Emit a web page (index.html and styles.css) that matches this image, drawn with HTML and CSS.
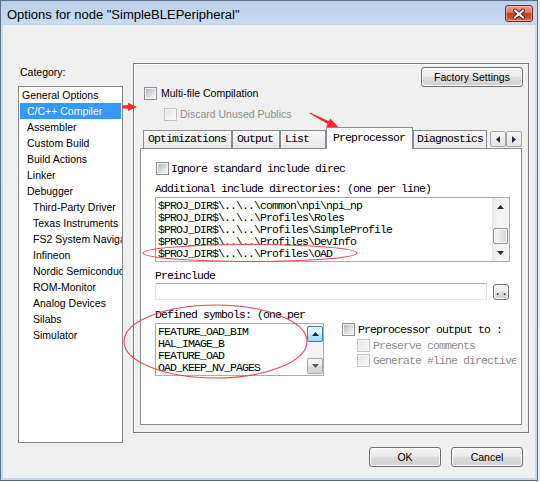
FILE: index.html
```html
<!DOCTYPE html>
<html>
<head>
<meta charset="utf-8">
<title>Options for node</title>
<link rel="stylesheet" href="styles.css">
</head>
<body>
<div class="window">
  <div class="titlebar">
    <span class="title">Options for node "SimpleBLEPeripheral"</span>
    <div class="close">
      <svg width="26" height="14" viewBox="0 0 26 14">
        <path d="M9 3.5 L17 10.5 M17 3.5 L9 10.5" stroke="#4a1e18" stroke-width="4" stroke-linecap="round" fill="none"/>
        <path d="M9 3.5 L17 10.5 M17 3.5 L9 10.5" stroke="#ffffff" stroke-width="2.2" stroke-linecap="round" fill="none"/>
      </svg>
    </div>
  </div>
  <div class="client">
    <div class="main">
      <div class="leftcol">
        <div class="cat-label">Category:</div>
        <div class="listbox">
          <div class="item lv0">General Options</div>
          <div class="item lv1 selected">C/C++ Compiler</div>
          <div class="item lv1">Assembler</div>
          <div class="item lv1">Custom Build</div>
          <div class="item lv1">Build Actions</div>
          <div class="item lv1">Linker</div>
          <div class="item lv1">Debugger</div>
          <div class="item lv2">Third-Party Driver</div>
          <div class="item lv2">Texas Instruments</div>
          <div class="item lv2">FS2 System Navigator</div>
          <div class="item lv2">Infineon</div>
          <div class="item lv2">Nordic Semiconductor</div>
          <div class="item lv2">ROM-Monitor</div>
          <div class="item lv2">Analog Devices</div>
          <div class="item lv2">Silabs</div>
          <div class="item lv2">Simulator</div>
        </div>
      </div>
      <div class="frame">
        <div class="frame-top">
          <button class="btn factory">Factory Settings</button>
        </div>
        <div class="chkrow multi"><span class="cb"></span><span>Multi-file Compilation</span></div>
        <div class="chkrow discard disabled"><span class="cb"></span><span>Discard Unused Publics</span></div>
        <div class="tabs">
          <div class="tabstrip">
            <div class="tab t-opt">Optimizations</div>
            <div class="tab t-out">Output</div>
            <div class="tab t-list">List</div>
            <div class="tab t-pre active">Preprocessor</div>
            <div class="tab t-diag">Diagnostics</div>
            <div class="tabscroll">
              <div class="sbtn"><svg width="4" height="7" viewBox="0 0 4 7"><polygon points="4,0 0,3.5 4,7" fill="#1e2a44"/></svg></div>
              <div class="sbtn"><svg width="4" height="7" viewBox="0 0 4 7"><polygon points="0,0 4,3.5 0,7" fill="#1e2a44"/></svg></div>
            </div>
          </div>
          <div class="page mono">
            <div class="chkrow ignore"><span class="cb"></span><span>Ignore standard include direc</span></div>
            <div class="lbl addl">Additional include directories: (one per line)</div>
            <div class="incbox">
              <div class="lines">
                <div class="line">$PROJ_DIR$\..\..\common\npi\npi_np</div>
                <div class="line">$PROJ_DIR$\..\..\Profiles\Roles</div>
                <div class="line">$PROJ_DIR$\..\..\Profiles\SimpleProfile</div>
                <div class="line">$PROJ_DIR$\..\..\Profiles\DevInfo</div>
                <div class="line">$PROJ_DIR$\..\..\Profiles\OAD</div>
              </div>
              <div class="vscroll">
                <div class="sarrow"><svg width="7" height="4" viewBox="0 0 7 4"><polygon points="0,4 3.5,0 7,4" fill="#2b2b2b"/></svg></div>
                <div class="thumb"></div>
                <div class="sarrow"><svg width="7" height="4" viewBox="0 0 7 4"><polygon points="0,0 3.5,4 7,0" fill="#2b2b2b"/></svg></div>
              </div>
            </div>
            <div class="lbl preinc">Preinclude</div>
            <div class="prerow">
              <div class="preinput"></div>
              <button class="btn dots">..</button>
            </div>
            <div class="lower">
              <div class="defcol">
                <div class="lbl">Defined symbols: (one per</div>
                <div class="defbox">
                  <div class="lines">
                    <div class="line">FEATURE_OAD_BIM</div>
                    <div class="line">HAL_IMAGE_B</div>
                    <div class="line">FEATURE_OAD</div>
                    <div class="line">OAD_KEEP_NV_PAGES</div>
                  </div>
                  <div class="dscroll">
                    <div class="sb sb-up"><svg width="7" height="4" viewBox="0 0 7 4"><polygon points="0,4 3.5,0 7,4" fill="#0f2a4a"/></svg></div>
                    <div class="sb sb-down"><svg width="7" height="4" viewBox="0 0 7 4"><polygon points="0,0 3.5,4 7,0" fill="#5a5a5a"/></svg></div>
                  </div>
                </div>
              </div>
              <div class="rightcol">
                <div class="chkrow ppout"><span class="cb"></span><span>Preprocessor output to :</span></div>
                <div class="chkrow sub disabled"><span class="cb"></span><span>Preserve comments</span></div>
                <div class="chkrow sub sub2 disabled"><span class="cb"></span><span>Generate #line directive</span></div>
              </div>
            </div>
          </div>
        </div>
      </div>
    </div>
    <div class="footer">
      <button class="btn dlg">OK</button>
      <button class="btn dlg">Cancel</button>
    </div>
  </div>
</div>
<svg class="annot" width="540" height="482" viewBox="0 0 540 482">
  <polygon points="122,105.5 128,105 128,102.8 137,107 128,111 128,108.8 122,108.5" fill="#ff2b2b"/>
  <polygon points="310,112.4 329,121.3 330.3,118.4 339.5,128.3 326.1,126.8 327.6,123.9 309.6,113.4" fill="#ff2b2b"/>
  <ellipse cx="250" cy="253" rx="107" ry="8.5" fill="none" stroke="#e9494e" stroke-width="1.1"/>
  <ellipse cx="215.5" cy="341.5" rx="91.5" ry="36.5" fill="none" stroke="#e9494e" stroke-width="1.1"/>
</svg>
</body>
</html>
```

FILE: styles.css
```css
* { box-sizing: border-box; margin: 0; padding: 0; }
html, body { width: 540px; height: 482px; overflow: hidden; }
body {
  position: relative;
  background: #eceff3;
  font-family: "Liberation Sans", Arial, sans-serif;
  font-size: 10.5px;
  color: #000;
}
.window {
  width: 538px;
  height: 481px;
  border: 1px solid #5d7088;
  background: linear-gradient(#bad1ea, #cadcf0 26px, #c4d8ee);
  padding: 0 2px 2px 2px;
  display: flex;
  flex-direction: column;
}
.titlebar {
  height: 24px;
  display: flex;
  align-items: flex-start;
  padding: 3px 2px 0 4px;
}
.title {
  flex: 1;
  font-size: 13px;
  line-height: 21px;
  color: #000;
  white-space: nowrap;
}
.close {
  width: 28px;
  height: 17px;
  margin-top: 1px;
  border: 1px solid #6b2a22;
  border-radius: 3px;
  background: linear-gradient(#eea08e 0%, #dc7a64 42%, #c63d22 50%, #cc4f33 78%, #e4846a 100%);
  box-shadow: inset 0 0 0 1px rgba(255, 220, 210, 0.45);
  display: flex;
  align-items: center;
  justify-content: center;
}
.client {
  flex: 1;
  background: #f0f0f0;
  display: flex;
  flex-direction: column;
}
.main {
  display: flex;
  align-items: flex-start;
  gap: 10px;
  padding: 38px 0 0 15px;
}
.leftcol { width: 105px; }
.cat-label {
  margin-top: 2px;
  padding-left: 2px;
  height: 14px;
  line-height: 14px;
}
.listbox {
  margin-top: 7px;
  height: 357px;
  border: 1px solid #828790;
  background: #fff;
  overflow: hidden;
}
.item {
  height: 16px;
  line-height: 16px;
  white-space: nowrap;
  overflow: hidden;
}
.lv0 { padding-left: 3px; }
.lv1 { padding-left: 8px; }
.lv2 { padding-left: 14px; }
.item.selected {
  margin: 0 1px;
  padding-left: 7px;
  background: #3399ff;
  color: #fff;
}

.frame {
  width: 396px;
  height: 370px;
  border: 1px solid #7a7a7a;
  box-shadow: inset 1px 1px 0 #ffffff, 1px 1px 0 #ffffff;
  display: flex;
  flex-direction: column;
  align-items: flex-start;
}
.frame-top {
  align-self: stretch;
  display: flex;
  justify-content: flex-end;
  padding: 3px 5px 0 0;
}
.btn {
  height: 20px;
  border: 1px solid #707070;
  border-radius: 3px;
  background: linear-gradient(#f3f3f3 0%, #ececec 46%, #dddddd 50%, #d0d0d0 100%);
  box-shadow: inset 0 0 0 1px #fcfcfc;
  font: inherit;
  color: #000;
  display: flex;
  align-items: center;
  justify-content: center;
}
.factory { width: 102px; }

.chkrow {
  display: flex;
  align-items: center;
  height: 13px;
  line-height: 13px;
  white-space: nowrap;
}
.cb {
  flex: none;
  width: 13px;
  height: 13px;
  border: 1px solid #8e8f8f;
  padding: 1px;
  background: linear-gradient(135deg, #b4b8be 0%, #e4e6e9 70%, #f2f3f4 100%) content-box, #f4f4f4;
}
.disabled { color: #8d8d8d; }
.disabled .cb {
  border-color: #c4c4c4;
  background: linear-gradient(135deg, #e6e6e6, #f7f7f7) content-box, #f7f7f7;
}
.multi { margin-left: 10px; gap: 4px; }
.discard { margin: 8px 0 0 30px; gap: 3px; }

.tabs {
  margin: 6px 0 0 6px;
  width: 382px;
}
.tabstrip {
  position: relative;
  z-index: 1;
  display: flex;
  align-items: flex-end;
  height: 21px;
  padding-left: 3px;
}
.tab {
  height: 18px;
  border: 1px solid #898c95;
  border-bottom: none;
  background: linear-gradient(#f7f7f7, #e8e8e8);
  padding-left: 4px;
  line-height: 16px;
  white-space: nowrap;
  font-family: "Liberation Mono", "Courier New", monospace;
  font-size: 11.5px;
  letter-spacing: -0.9px;
}
.tab.active {
  height: 22px;
  margin-bottom: -1px;
  background: #fff;
  padding-left: 6px;
  line-height: 20px;
}
.t-opt { width: 89px; }
.t-out { width: 48px; }
.t-list { width: 46px; }
.t-pre { width: 87px; }
.t-diag { width: 74px; padding-left: 3px; }
.tabscroll {
  display: flex;
  margin: 0 0 1px 3px;
}
.sbtn {
  width: 16px;
  height: 16px;
  border: 1px solid #a7a7a7;
  border-radius: 2px;
  background: linear-gradient(#f6f6f6, #e3e3e3);
  display: flex;
  align-items: center;
  justify-content: center;
}

.mono {
  font-family: "Liberation Mono", "Courier New", monospace;
  font-size: 11.5px;
  letter-spacing: -0.9px;
}
.page {
  height: 277px;
  border: 1px solid #898c95;
  background: #fff;
  padding-left: 14px;
  display: flex;
  flex-direction: column;
  align-items: flex-start;
}
.ignore { margin: 13px 0 0 1px; gap: 2px; }
.lbl {
  height: 12px;
  line-height: 12px;
  white-space: nowrap;
}
.addl { margin-top: 8px; }
.incbox {
  margin-top: 2px;
  width: 355px;
  height: 65px;
  border: 1px solid #abadb3;
  display: flex;
}
.lines {
  flex: 1;
  padding: 2px 0 0 2px;
  overflow: hidden;
}
.line {
  height: 12px;
  line-height: 12px;
  white-space: nowrap;
}
.vscroll {
  width: 17px;
  display: flex;
  flex-direction: column;
  background: linear-gradient(90deg, #e9e9e9, #f4f4f4 40%, #f1f1f1);
}
.sarrow {
  height: 17px;
  display: flex;
  align-items: center;
  justify-content: center;
}
.thumb {
  height: 16px;
  margin: 13px 1px 0 1px;
  border: 1px solid #979797;
  border-radius: 2px;
  background: linear-gradient(90deg, #f5f5f5, #e6e6e6 50%, #d8d8d8);
  box-shadow: inset 0 0 0 1px #fbfbfb;
}
.preinc { margin-top: 8px; }
.prerow {
  display: flex;
  align-items: flex-start;
  gap: 6px;
  margin-top: 1px;
}
.preinput {
  width: 332px;
  height: 17px;
  border: 1px solid #abadb3;
  border-color: #abadb3 #dbdfe6 #e3e9ef #e2e3ea;
  background: #fff;
}
.dots {
  width: 16px;
  height: 16px;
  margin-top: 1px;
  align-items: flex-end;
  line-height: 12px;
  letter-spacing: 1px;
  padding-left: 1px;
  font-size: 10px;
}
.lower {
  display: flex;
  margin-top: 9px;
}
.defcol { width: 169px; }
.defbox {
  margin-top: 2px;
  height: 53px;
  border: 1px solid #abadb3;
  display: flex;
}
.dscroll {
  width: 16px;
  padding-top: 2px;
  display: flex;
  flex-direction: column;
  gap: 16px;
  background: #f5f5f5;
}
.sb {
  height: 16px;
  border-radius: 2px;
  display: flex;
  align-items: center;
  justify-content: center;
}
.sb-up {
  border: 1px solid #3c7fb1;
  background: linear-gradient(#eaf6fd 0%, #d9f0fc 48%, #bee6fd 52%, #a7d9f5 100%);
}
.sb-down {
  border: 1px solid #a9a9a9;
  background: linear-gradient(#f4f4f4 0%, #ebebeb 48%, #dcdcdc 52%, #d0d0d0 100%);
}
.rightcol {
  width: 174px;
  margin-left: 18px;
  padding-top: 14px;
  overflow: hidden;
}
.ppout { gap: 3px; }
.sub { margin: 3px 0 0 15px; gap: 3px; }
.sub2 { margin-top: 2px; }

.footer {
  display: flex;
  justify-content: flex-end;
  gap: 10px;
  padding: 4px 12px 0 0;
}
.dlg { width: 72px; }

.annot {
  position: absolute;
  left: 0;
  top: 0;
  pointer-events: none;
}
```
